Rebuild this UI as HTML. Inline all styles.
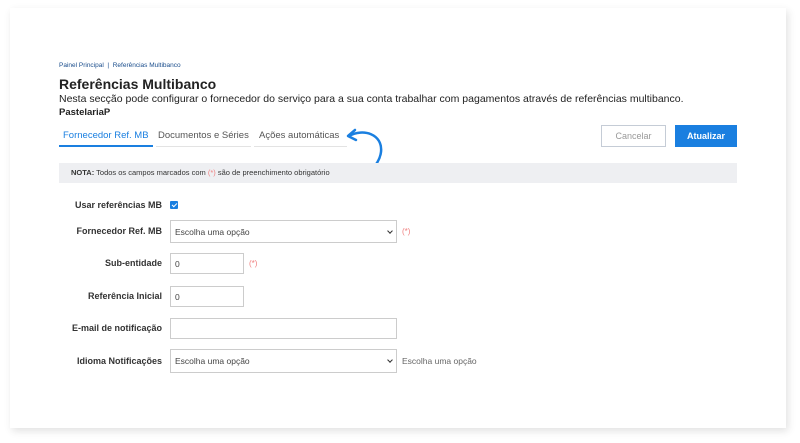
<!DOCTYPE html>
<html><head><meta charset="utf-8"><style>
*{box-sizing:border-box;margin:0;padding:0}
body{width:800px;height:443px;background:#fff;font-family:"Liberation Sans",sans-serif;position:relative;overflow:hidden;color:#222}
.card{position:absolute;left:10px;top:8px;width:776px;height:420px;background:#fff;box-shadow:2px 3px 8px rgba(0,0,0,.12)}
.a{position:absolute;white-space:nowrap}
.lbl{position:absolute;right:638px;font-size:9px;font-weight:bold;color:#333}
.inp{position:absolute;left:170px;border:1px solid #ccc;background:#fff;font-size:8.5px;color:#444;padding-left:4px;display:flex;align-items:center}
.req{position:absolute;color:#f08080;font-size:8px}
.chev{position:absolute;right:4px;top:50%;margin-top:-3px;width:4px;height:4px;border-right:1.3px solid #333;border-bottom:1.3px solid #333;transform:rotate(45deg)}
</style></head><body>
<div class="card"></div>
<div class="a" style="left:59px;top:62px;font-size:6.5px;color:#1a4d8c">Painel Principal &nbsp;| &nbsp;Referências Multibanco</div>
<div class="a" style="left:59px;top:76px;font-size:14px;font-weight:bold;color:#222">Referências Multibanco</div>
<div class="a" style="left:59px;top:93px;font-size:10.5px;color:#222">Nesta secção pode configurar o fornecedor do serviço para a sua conta trabalhar com pagamentos através de referências multibanco.</div>
<div class="a" style="left:59px;top:107px;font-size:9.5px;font-weight:bold">PastelariaP</div>
<div class="a" style="left:63px;top:130px;font-size:9.5px;color:#1a7fe0">Fornecedor Ref. MB</div>
<div class="a" style="left:59px;top:145px;width:94px;height:2px;background:#1a7fe0"></div>
<div class="a" style="left:158px;top:130px;font-size:9.5px;color:#555">Documentos e Séries</div>
<div class="a" style="left:156px;top:146px;width:95px;height:1px;background:#e3e3e3"></div>
<div class="a" style="left:259px;top:130px;font-size:9.5px;color:#555">Ações automáticas</div>
<div class="a" style="left:254px;top:146px;width:93px;height:1px;background:#e3e3e3"></div>
<svg class="a" style="left:343px;top:126px" width="45" height="44" viewBox="0 0 45 44"><path d="M6 10 C20 2 40 8 38 26 C37 34 32 40 30 42" fill="none" stroke="#1a7fe0" stroke-width="2.5" stroke-linecap="round"/><path d="M12 4 L5 10 L13 14" fill="none" stroke="#1a7fe0" stroke-width="2.5" stroke-linecap="round" stroke-linejoin="round"/></svg>
<div class="a" style="left:601px;top:125px;width:65px;height:22px;border:1px solid #c5ccd6;font-size:9px;color:#999;text-align:center;line-height:20px">Cancelar</div>
<div class="a" style="left:675px;top:125px;width:62px;height:22px;background:#1a7fe0;font-size:9px;font-weight:bold;color:#fff;text-align:center;line-height:22px">Atualizar</div>
<div class="a" style="left:59px;top:163px;width:678px;height:20px;background:#eeeff2;font-size:7.5px;color:#333;padding-left:12px;line-height:20px"><b>NOTA:</b> Todos os campos marcados com <span style="color:#f08080">(*)</span> são de preenchimento obrigatório</div>
<div class="lbl" style="top:200px">Usar referências MB</div>
<div class="a" style="left:170px;top:201px;width:8px;height:8px;background:#1a7fe0;border-radius:1px"><div style="position:absolute;left:2.5px;top:0.5px;width:3px;height:5px;border-right:1.3px solid #fff;border-bottom:1.3px solid #fff;transform:rotate(45deg)"></div></div>
<div class="lbl" style="top:226px">Fornecedor Ref. MB</div>
<div class="inp" style="top:220px;width:227px;height:23px">Escolha uma opção<div class="chev"></div></div>
<div class="req" style="left:402px;top:227px">(*)</div>
<div class="lbl" style="top:258px">Sub-entidade</div>
<div class="inp" style="top:253px;width:74px;height:21px">0</div>
<div class="req" style="left:249px;top:259px">(*)</div>
<div class="lbl" style="top:291px">Referência Inicial</div>
<div class="inp" style="top:286px;width:74px;height:21px">0</div>
<div class="lbl" style="top:323px">E-mail de notificação</div>
<div class="inp" style="top:318px;width:227px;height:21px"></div>
<div class="lbl" style="top:356px">Idioma Notificações</div>
<div class="inp" style="top:349px;width:227px;height:24px">Escolha uma opção<div class="chev"></div></div>
<div class="a" style="left:402px;top:356px;font-size:8.5px;color:#666">Escolha uma opção</div>
</body></html>
